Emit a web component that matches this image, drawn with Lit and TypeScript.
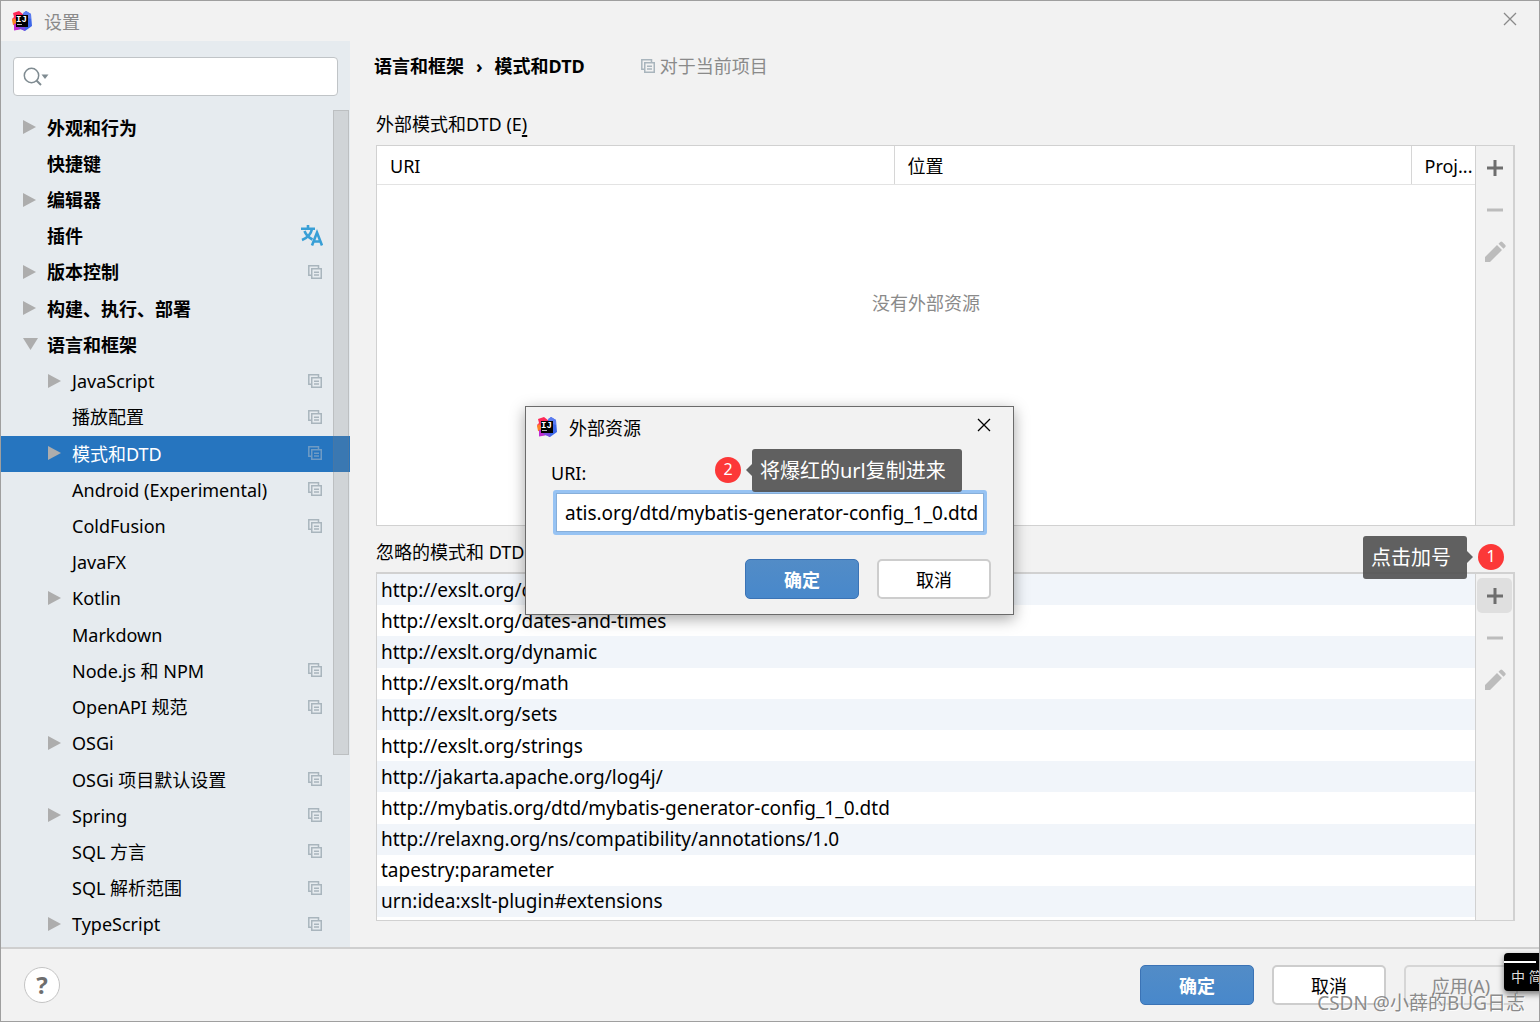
import { LitElement, html, css, svg, nothing } from "lit";
import { customElement, property } from "lit/decorators.js";
import { classMap } from "lit/directives/class-map.js";

interface TreeItem {
  label: string;
  level: 0 | 1;
  arrow?: "closed" | "open";
  mark?: "project" | "translate";
  selected?: boolean;
}

const TREE: TreeItem[] = [
  { label: "外观和行为", level: 0, arrow: "closed" },
  { label: "快捷键", level: 0 },
  { label: "编辑器", level: 0, arrow: "closed" },
  { label: "插件", level: 0, mark: "translate" },
  { label: "版本控制", level: 0, arrow: "closed", mark: "project" },
  { label: "构建、执行、部署", level: 0, arrow: "closed" },
  { label: "语言和框架", level: 0, arrow: "open" },
  { label: "JavaScript", level: 1, arrow: "closed", mark: "project" },
  { label: "播放配置", level: 1, mark: "project" },
  { label: "模式和DTD", level: 1, arrow: "closed", mark: "project", selected: true },
  { label: "Android (Experimental)", level: 1, mark: "project" },
  { label: "ColdFusion", level: 1, mark: "project" },
  { label: "JavaFX", level: 1 },
  { label: "Kotlin", level: 1, arrow: "closed" },
  { label: "Markdown", level: 1 },
  { label: "Node.js 和 NPM", level: 1, mark: "project" },
  { label: "OpenAPI 规范", level: 1, mark: "project" },
  { label: "OSGi", level: 1, arrow: "closed" },
  { label: "OSGi 项目默认设置", level: 1, mark: "project" },
  { label: "Spring", level: 1, arrow: "closed", mark: "project" },
  { label: "SQL 方言", level: 1, mark: "project" },
  { label: "SQL 解析范围", level: 1, mark: "project" },
  { label: "TypeScript", level: 1, arrow: "closed", mark: "project" },
];

const IGNORED = [
  "http://exslt.org/common",
  "http://exslt.org/dates-and-times",
  "http://exslt.org/dynamic",
  "http://exslt.org/math",
  "http://exslt.org/sets",
  "http://exslt.org/strings",
  "http://jakarta.apache.org/log4j/",
  "http://mybatis.org/dtd/mybatis-generator-config_1_0.dtd",
  "http://relaxng.org/ns/compatibility/annotations/1.0",
  "tapestry:parameter",
  "urn:idea:xslt-plugin#extensions",
];

const SHAPES = {
  logo: {
    size: [20, 20],
    body: svg`
      <path d="M1 2 7 0l5 4v8l-9 1-3-5 2-2z" fill="#fe2857"/>
      <path d="M0 9l2-2 4 4v4l-5-1z" fill="#fd8224"/>
      <path d="M2 13l4-1 6 4-4 2.500-6 1z" fill="#c22bd0"/>
      <path d="M11 3l3-3 5 3 1 12-7 5-6-3z" fill="#3d67e8"/>
      <path d="M11 2l3-2 5 3v5l-6-2z" fill="#5a7bf0"/>
      <path d="M6 16h7v4l-6-2.500z" fill="#7a4be0"/>
      <rect x="4" y="4" width="12" height="12" fill="#000"/>
      <text x="4" y="11" font-family="Liberation Mono" font-weight="700" font-size="9" fill="#fff">IJ</text>
      <rect x="5" y="13" width="5" height="1" fill="#bbb"/>`,
  },
  project: {
    size: [14, 14],
    body: svg`<g fill="none" stroke="currentColor" stroke-width="1.500">
      <path d="M3 10.200H.8V.8H10.500V3"/><rect x="3.750" y="3.750" width="9.500" height="9.500"/>
      <path d="M6 7.300h5M6 9.900h5"/></g>`,
  },
  translate: {
    size: [22, 21],
    body: svg`<g fill="none" stroke="#389fd6" stroke-width="2.600">
      <path d="M0 3.700h14M7 0v4M11 4C10 9 6 13 1 15M3.500 6c1.500 4 4 6.500 8 8.500"/>
      <path d="M11 20.500 16 7.500 21 20.500M12.500 16.500h7"/></g>`,
  },
  search: {
    size: [26, 20],
    body: svg`<circle cx="8.500" cy="8.500" r="7.200" fill="none" stroke="#7f8b91" stroke-width="1.500"/>
      <path d="M13.500 13.500l4.500 4.500" stroke="#7f8b91" stroke-width="2"/><path d="M18.500 7.500h7l-3.500 4.500z" fill="#7f8b91"/>`,
  },
  closed: { size: [14, 14], body: svg`<path d="M0 0l13 7-13 7z" fill="#adadad"/>` },
  open: { size: [15, 12], body: svg`<path d="M0 0h15l-7.500 12z" fill="#adadad"/>` },
  plus: { size: [22, 22], body: svg`<path d="M3 11h16M11 3v16" stroke="#6e6e6e" stroke-width="3"/>` },
  minus: { size: [22, 22], body: svg`<path d="M3 11h16" stroke="#bcbcbc" stroke-width="3"/>` },
  pencil: {
    size: [22, 22],
    body: svg`<path d="M1 21v-5L13 4l5 5L6 21zM14.500 2.800l1.800-1.800q1-.8 2 0l3 3q.8 1 0 2l-1.800 1.800z" fill="#bcbcbc"/>`,
  },
  close: { size: [14, 14], body: svg`<path d="M1 1l12 12M13 1L1 13" stroke="currentColor" stroke-width="1.300"/>` },
};

const icon = (name: keyof typeof SHAPES) => {
  const { size, body } = SHAPES[name];
  return html`<svg width=${size[0]} height=${size[1]} viewBox="0 0 ${size[0]} ${size[1]}" aria-hidden="true">${body}</svg>`;
};

const base = css`
  * { box-sizing: border-box; }
  svg { display: block; flex: none; }
  button, input { font: inherit; color: inherit; margin: 0; }
  .plain { display: grid; place-items: center; padding: 0; border: 0; background: none; }
  .button {
    width: 114px; height: 40px; padding: 2px 0 0;
    border: 2px solid #cdcdcd; border-radius: 5px; background: #fff;
  }
  .primary { border: 1px solid #3b73b5; background: linear-gradient(#528cc7, #4888cb); color: #fff; font-weight: 700; }
`;

@customElement("settings-tree")
class SettingsTree extends LitElement {
  static styles = [base, css`
    :host { display: flex; flex-direction: column; background: #e6ebef; padding: 16px 0 4px; min-height: 0; }
    .search {
      display: flex; align-items: center; gap: 8px; height: 39px; margin: 0 12px 14px; padding: 0 9px;
      background: #fff; border: 1px solid #c0c4c7; border-radius: 4px;
    }
    .query { flex: 1; min-width: 0; border: 0; outline: 0; background: none; }
    .area { position: relative; flex: 1; display: flex; }
    .tree { flex: 1; display: flex; flex-direction: column; margin: 0; padding: 0; list-style: none; }
    .row { flex: 1; display: flex; align-items: center; padding: 0 28px 0 22px; }
    .child { padding-left: 47px; }
    .top { font-weight: 700; }
    .arrow { width: 24px; padding-bottom: 2px; }
    .name { flex: 1; padding-bottom: 1px; }
    .mark { color: #a9b5bd; padding-bottom: 2px; }
    .translate { margin-right: -1px; }
    .selected { background: #2675bf; color: #fff; }
    .selected .mark { color: #6f9bc4; }
    .thumb {
      position: absolute; top: 0; right: 1px; width: 16px; height: 645px;
      background: rgba(130, 130, 130, .22); border: 1px solid rgba(120, 120, 120, .22);
    }
  `];

  render() {
    return html`
      <label class="search">${icon("search")}<input class="query" type="text" aria-label="搜索" /></label>
      <div class="area">
        <ul class="tree">
          ${TREE.map((item) => html`
            <li class=${classMap({ row: true, top: item.level === 0, child: item.level === 1, selected: !!item.selected })}>
              <span class="arrow">${item.arrow ? icon(item.arrow) : nothing}</span>
              <span class="name">${item.label}</span>
              ${item.mark ? html`<span class="mark ${item.mark}">${icon(item.mark)}</span>` : nothing}
            </li>`)}
        </ul>
        <div class="thumb"></div>
      </div>`;
  }
}

@customElement("edit-toolbar")
class EditToolbar extends LitElement {
  @property({ type: Boolean }) active = false;

  static styles = [base, css`
    :host { display: flex; flex-direction: column; align-items: center; gap: 7px; width: 39px; padding-top: 4px;
      border-left: 1px solid #d1d1d1; border-right: 1px solid #d1d1d1; background: #f2f2f2; }
    .tool { width: 35px; height: 35px; border-radius: 5px; }
    .active { background: #dfdfdf; }
  `];

  render() {
    return html`
      <button class="plain tool ${this.active ? "active" : ""}" aria-label="添加">${icon("plus")}</button>
      <button class="plain tool" aria-label="移除" disabled>${icon("minus")}</button>
      <button class="plain tool" aria-label="编辑" disabled>${icon("pencil")}</button>`;
  }
}

@customElement("step-note")
class StepNote extends LitElement {
  @property() step = "";
  @property() text = "";
  @property({ type: Boolean, reflect: true }) flip = false;

  static styles = [base, css`
    :host { display: flex; align-items: center; gap: 11px; }
    :host([flip]) { flex-direction: row-reverse; }
    .dot { width: 26px; height: 26px; margin-bottom: 2px; border-radius: 50%; text-align: center;
      background: #fc3838; color: #fff; font-size: 16px; line-height: 24px; }
    .bubble { position: relative; height: 43px; padding: 0 16px 0 8px; border-radius: 3px;
      background: rgba(80, 80, 80, .9); color: #fff; font-size: 20px; line-height: 43px; white-space: nowrap; }
    .bubble::before { content: ""; position: absolute; top: 15px; right: 100%;
      border: 6px solid transparent; border-left: 0; border-right-color: rgba(80, 80, 80, .9); }
    :host([flip]) .bubble::before { right: auto; left: 100%;
      border: 6px solid transparent; border-right: 0; border-left-color: rgba(80, 80, 80, .9); }
  `];

  render() {
    return html`<span class="dot">${this.step}</span><span class="bubble">${this.text}</span>`;
  }
}

@customElement("resource-dialog")
class ResourceDialog extends LitElement {
  static styles = [base, css`
    :host { display: flex; flex-direction: column; background: #f2f2f2; border: 1px solid #6b6b6b;
      box-shadow: 0 4px 14px rgba(0, 0, 0, .35); }
    .title { display: flex; align-items: center; gap: 12px; height: 40px; padding: 0 22px 0 11px; }
    .heading { flex: 1; margin: 0; padding-top: 2px; font: inherit; }
    .title .plain { padding-bottom: 4px; }
    .form { display: flex; flex-direction: column; gap: 5px; padding: 14px 24px 0 25px; }
    .value { height: 45px; margin: 0 2px; padding: 1px 2px 0 9px; border: 3px solid #97c3f3; border-radius: 3px;
      outline: 1px solid #87afda; outline-offset: -4px; background: #fff; font-size: 19px; }
    .actions { display: flex; justify-content: flex-end; gap: 18px; padding: 24px 22px 15px; }
    .note { position: absolute; left: 189px; top: 42px; }
  `];

  render() {
    return html`
      <div class="title">
        ${icon("logo")}
        <h2 class="heading">外部资源</h2>
        <button class="plain" aria-label="关闭">${icon("close")}</button>
      </div>
      <div class="form">
        <label for="uri">URI:</label>
        <input class="value" id="uri" type="text" value="atis.org/dtd/mybatis-generator-config_1_0.dtd" />
      </div>
      <div class="actions">
        <button class="button primary">确定</button>
        <button class="button">取消</button>
      </div>
      <step-note class="note" step="2" text="将爆红的url复制进来"></step-note>`;
  }
}

@customElement("app-root")
class AppRoot extends LitElement {
  static styles = [base, css`
    :host {
      position: relative; display: grid; grid-template: 40px minmax(0, 1fr) auto / 349px minmax(0, 1fr);
      height: 100vh; min-height: 900px; box-sizing: border-box; overflow: hidden;
      border: 1px solid #9f9f9f; background: #f2f2f2; color: #000;
      font: 18px/24px "Noto Sans", "Noto Sans CJK SC", sans-serif;
    }
    .titlebar { grid-column: 1 / -1; display: flex; align-items: center; gap: 12px; padding: 0 22px 0 11px; color: #8a8a8a; }
    .heading { flex: 1; margin: 0; padding-top: 2px; font: inherit; }
    .titlebar .plain { padding-bottom: 4px; }
    .main { display: grid; grid-template-rows: auto auto minmax(0, 381fr) auto minmax(0, 349fr);
      padding: 13px 24px 26px 26px; }
    .crumbs { display: flex; align-items: center; font-weight: 700; gap: 12px; margin: 0 0 34px -2px; }
    .scope { display: flex; align-items: center; gap: 5px; margin-left: 44px; color: #8a8a8a; font-weight: 400; }
    .scope svg { color: #a9b5bd; }
    .caption { margin-bottom: 9px; }
    .caption u { text-decoration-skip-ink: none; text-underline-offset: 4px; text-decoration-thickness: 2px; }
    .second { margin: 14px 0 8px; }
    .panel { display: flex; border: 1px solid #d1d1d1; background: #fff; }
    .second + .panel { border-top-width: 2px; }
    .content { flex: 1; min-width: 0; }
    .grid { width: 100%; height: 100%; border-collapse: collapse; table-layout: fixed; }
    .narrow { width: 64px; }
    .head { height: 38px; padding: 2px 0 0 13px; text-align: left; font-weight: 400;
      border-bottom: 1px solid #e3e3e3; white-space: nowrap; }
    .head + .head { border-left: 1px solid #d6d6d6; }
    .empty { padding: 106px 0 0; text-align: center; vertical-align: top; color: #8a8a8a; }
    .list { flex: 1; display: flex; flex-direction: column; margin: 0; padding: 0 0 3px; list-style: none; font-size: 19px; }
    .entry { flex: 1; display: flex; align-items: center; padding: 0 4px; }
    .entry:nth-child(odd) { background: #f1f5fa; }
    .footer { grid-column: 1 / -1; display: flex; align-items: center; gap: 18px; height: 74px; padding: 0 21px 0 23px;
      border-top: 2px solid #cfcfcf; }
    .help { width: 36px; height: 36px; margin-right: auto; padding: 0; border: 1px solid #c4c4c4; border-radius: 50%;
      background: #fff; color: #6e6e6e; font-size: 24px; font-weight: 700; line-height: 32px; }
    .muted { background: none; color: #8a8a8a; border-color: #d6d6d6; }
    .dialog { position: absolute; left: 524px; top: 405px; width: 489px; }
    .note { position: absolute; right: 35px; top: 535px; }
    .ime { position: absolute; right: -8px; bottom: 30px; width: 43px; height: 38px; padding: 12px 0 0 7px; overflow: hidden;
      border-radius: 4px; background: #000; box-shadow: 0 3px 6px rgba(0, 0, 0, .5); color: #ddd; font-size: 14px; white-space: nowrap; }
    .ime::before { content: ""; position: absolute; left: 0; top: 8px; width: 32px; height: 2px; background: #fff; }
    .credit { position: absolute; right: 14px; bottom: 6px; color: rgba(110, 110, 110, .8); font-size: 19px;
      text-shadow: 1px 1px 0 rgba(255, 255, 255, .8); }
  `];

  render() {
    return html`
      <header class="titlebar">
        ${icon("logo")}
        <h1 class="heading">设置</h1>
        <button class="plain" aria-label="关闭">${icon("close")}</button>
      </header>
      <settings-tree></settings-tree>
      <main class="main">
        <nav class="crumbs">
          <span>语言和框架</span><span>›</span><span>模式和DTD</span>
          <span class="scope">${icon("project")}对于当前项目</span>
        </nav>
        <div class="caption">外部模式和DTD (E<u>)</u></div>
        <section class="panel">
          <div class="content">
            <table class="grid">
              <colgroup><col /><col /><col class="narrow" /></colgroup>
              <thead><tr><th class="head">URI</th><th class="head">位置</th><th class="head">Proj...</th></tr></thead>
              <tbody><tr><td class="empty" colspan="3">没有外部资源</td></tr></tbody>
            </table>
          </div>
          <edit-toolbar></edit-toolbar>
        </section>
        <div class="caption second">忽略的模式和 DTD</div>
        <section class="panel">
          <ul class="list">${IGNORED.map((uri) => html`<li class="entry">${uri}</li>`)}</ul>
          <edit-toolbar active></edit-toolbar>
        </section>
      </main>
      <footer class="footer">
        <button class="help" aria-label="帮助">?</button>
        <button class="button primary">确定</button>
        <button class="button">取消</button>
        <button class="button muted" disabled>应用(A)</button>
      </footer>
      <resource-dialog class="dialog"></resource-dialog>
      <step-note class="note" step="1" text="点击加号" flip></step-note>
      <div class="ime">中 简</div>
      <div class="credit">CSDN @小薛的BUG日志</div>`;
  }
}
